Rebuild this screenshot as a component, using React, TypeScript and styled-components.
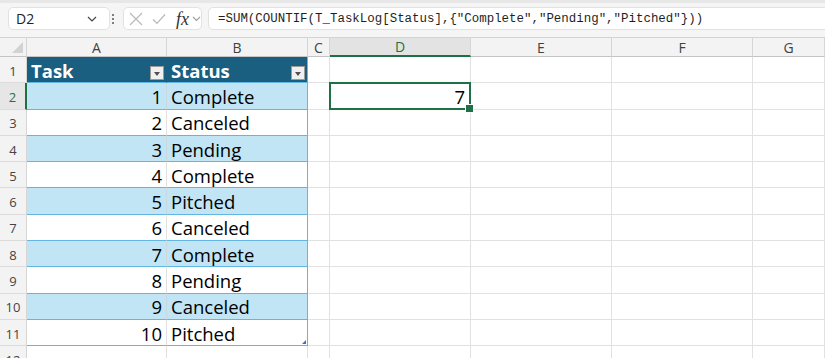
import React from "react";
import styled, { createGlobalStyle } from "styled-components";

const GlobalStyle = createGlobalStyle`
  html, body { margin: 0; padding: 0; background: #fff; }
  body {
    width: 825px;
    height: 358px;
    overflow: hidden;
    font-family: "Open Sans", "Liberation Sans", sans-serif;
  }
  * { box-sizing: border-box; }
`;

const GREEN = "#1e7145";
const TABLE_LINE = "#62b6e6";

const Window = styled.div`
  width: 825px;
  height: 358px;
  overflow: hidden;
  display: flex;
  flex-direction: column;
`;

const Bar = styled.div`
  height: 38px;
  flex: none;
  display: flex;
  align-items: flex-start;
  padding: 4px 0 0 8px;
  background: #f5f5f5;
  border-top: 3px solid #e7e7e7;
  border-bottom: 1px solid #d4d4d4;
`;

const NameBox = styled.div`
  width: 102px;
  height: 23px;
  display: flex;
  align-items: center;
  justify-content: space-between;
  padding: 0 12px 0 7px;
  background: #fff;
  border: 1px solid #e2e2e2;
  border-radius: 5px;
  font-size: 14px;
  color: #222;
`;

const Kebab = styled.div`
  width: 3px;
  height: 23px;
  margin: 0 8px 0 2px;
  display: flex;
  flex-direction: column;
  justify-content: center;
  gap: 2px;
  span {
    width: 2px;
    height: 2px;
    background: #555;
    border-radius: 1px;
  }
`;

const FxBox = styled.div`
  width: 79px;
  height: 23px;
  display: flex;
  align-items: center;
  gap: 9px;
  padding-left: 5px;
  background: #fff;
  border: 1px solid #e2e2e2;
  border-radius: 5px;
`;

const Fx = styled.span`
  font-family: "Liberation Serif", "DejaVu Serif", serif;
  font-style: italic;
  font-size: 18px;
  color: #333;
  margin-left: 1px;
  margin-right: -6px;
  line-height: 1;
`;

const Formula = styled.div`
  flex: 1;
  height: 23px;
  margin: 0 -10px 0 6px;
  display: flex;
  align-items: center;
  padding-left: 9px;
  background: #fff;
  border: 1px solid #e2e2e2;
  border-radius: 5px;
  font-family: "Liberation Mono", "DejaVu Sans Mono", monospace;
  font-size: 12.45px;
  color: #1f1f1f;
  white-space: pre;
`;

const Sheet = styled.div`
  display: grid;
  grid-template-columns: 27px 140px 141px 22px 141px 141px 141px 1fr;
  grid-template-rows: 19px repeat(12, 26.3px);
`;

const Corner = styled.div`
  background: #f3f3f3;
  border-right: 1px solid #d6d6d6;
  border-bottom: 1px solid #c4c4c4;
  display: flex;
  align-items: flex-end;
  justify-content: flex-end;
  padding: 0 3px 3px 0;
`;

const ColHead = styled.div<{ $active?: boolean }>`
  display: flex;
  align-items: center;
  justify-content: center;
  font-size: 14px;
  color: ${p => (p.$active ? GREEN : "#424242")};
  background: ${p => (p.$active ? "#e3e3e3" : "#f3f3f3")};
  border-right: 1px solid #d6d6d6;
  border-bottom: ${p => (p.$active ? `2px solid ${GREEN}` : "1px solid #c4c4c4")};
`;

const RowHead = styled.div<{ $active?: boolean }>`
  display: flex;
  align-items: center;
  justify-content: center;
  font-size: 13px;
  padding-top: 2px;
  color: ${p => (p.$active ? GREEN : "#444")};
  background: ${p => (p.$active ? "#e6e6e6" : "#f3f3f3")};
  border-right: ${p => (p.$active ? `2px solid ${GREEN}` : "1px solid #d6d6d6")};
  border-bottom: 1px solid #dcdcdc;
`;

type Kind = "plain" | "head" | "band" | "row";

const bg: Record<Kind, string> = {
  plain: "#fff",
  head: "#1a5e80",
  band: "#c1e5f5",
  row: "#fff",
};

const Cell = styled.div<{ $kind: Kind; $right?: boolean; $edge?: boolean }>`
  position: relative;
  display: flex;
  align-items: center;
  justify-content: ${p => (p.$right ? "flex-end" : "flex-start")};
  padding: 1px 4px 0 4px;
  font-size: 18.5px;
  white-space: nowrap;
  color: ${p => (p.$kind === "head" ? "#fff" : "#000")};
  font-weight: ${p => (p.$kind === "head" ? 700 : 400)};
  background: ${p => bg[p.$kind]};
  border-right: 1px solid
    ${p =>
      p.$edge ? TABLE_LINE : p.$kind === "head" ? "#1a5e80" : p.$kind === "band" ? "#c9d7de" : "#e1e1e1"};
  border-bottom: 1px solid ${p => (p.$kind === "plain" ? "#e1e1e1" : TABLE_LINE)};
`;

const Selected = styled(Cell)`
  z-index: 2;
  padding-right: 5px;
  &::after {
    content: "";
    position: absolute;
    inset: -1px -1px -1px -1px;
    border: 2px solid ${GREEN};
    pointer-events: none;
  }
  &::before {
    content: "";
    position: absolute;
    right: -4px;
    bottom: -4px;
    width: 7px;
    height: 7px;
    background: ${GREEN};
    border: 1px solid #fff;
    z-index: 3;
  }
`;

const ResizeCorner = styled(Cell)`
  &::after {
    content: "";
    position: absolute;
    right: 1px;
    bottom: 1px;
    border-style: solid;
    border-width: 0 0 4px 4px;
    border-color: transparent transparent #3c6fd1 transparent;
  }
`;

const FilterButton = styled.div`
  width: 14px;
  height: 14px;
  margin-left: auto;
  align-self: flex-end;
  margin-bottom: 2px;
  margin-right: -2px;
  background: #f0f0f0;
  border: 1px solid #9a9a9a;
  display: flex;
  align-items: center;
  justify-content: center;
  &::after {
    content: "";
    border-style: solid;
    border-width: 4px 3.5px 0 3.5px;
    border-color: #505050 transparent transparent transparent;
    margin-top: 1px;
  }
`;

const ChevronDown = ({ w = 10, color = "#555" }: { w?: number; color?: string }) => (
  <svg width={w} height={w * 0.6} viewBox="0 0 10 6">
    <path d="M1 1 L5 5 L9 1" fill="none" stroke={color} strokeWidth={1.2} />
  </svg>
);

const columns = ["A", "B", "C", "D", "E", "F", "G"];

const tasks: [number, string][] = [
  [1, "Complete"],
  [2, "Canceled"],
  [3, "Pending"],
  [4, "Complete"],
  [5, "Pitched"],
  [6, "Canceled"],
  [7, "Complete"],
  [8, "Pending"],
  [9, "Canceled"],
  [10, "Pitched"],
];

const FORMULA = '=SUM(COUNTIF(T_TaskLog[Status],{"Complete","Pending","Pitched"}))';

const PlainCells = ({ count }: { count: number }) => (
  <>
    {Array.from({ length: count }).map((_, i) => (
      <Cell key={i} $kind="plain" />
    ))}
  </>
);

export default function App() {
  return (
    <Window>
      <GlobalStyle />
      <Bar>
        <NameBox>
          D2
          <ChevronDown w={10} color="#444" />
        </NameBox>
        <Kebab>
          <span />
          <span />
          <span />
        </Kebab>
        <FxBox>
          <svg width="14" height="14" viewBox="0 0 14 14">
            <path d="M1 1 L13 13 M13 1 L1 13" stroke="#b8b8b8" strokeWidth={1.2} />
          </svg>
          <svg width="14" height="12" viewBox="0 0 14 12">
            <path d="M1 6.5 L5 10.5 L13 1.5" fill="none" stroke="#b8b8b8" strokeWidth={1.2} />
          </svg>
          <Fx>fx</Fx>
          <ChevronDown w={9} color="#9a9a9a" />
        </FxBox>
        <Formula>{FORMULA}</Formula>
      </Bar>

      <Sheet>
        <Corner>
          <svg width="11" height="11" viewBox="0 0 11 11">
            <path d="M11 0 L11 11 L0 11 Z" fill="#d2d2d2" />
          </svg>
        </Corner>
        {columns.map(c => (
          <ColHead key={c} $active={c === "D"}>
            {c}
          </ColHead>
        ))}

        <RowHead>1</RowHead>
        <Cell $kind="head">
          Task
          <FilterButton />
        </Cell>
        <Cell $kind="head" $edge>
          Status
          <FilterButton />
        </Cell>
        <PlainCells count={5} />

        {tasks.map(([n, status], i) => {
          const row = i + 2;
          const kind: Kind = i % 2 === 0 ? "band" : "row";
          const last = i === tasks.length - 1;
          const StatusCell = last ? ResizeCorner : Cell;
          return (
            <React.Fragment key={n}>
              <RowHead $active={row === 2}>{row}</RowHead>
              <Cell $kind={kind} $right>
                {n}
              </Cell>
              <StatusCell $kind={kind} $edge>
                {status}
              </StatusCell>
              <Cell $kind="plain" />
              {row === 2 ? (
                <Selected $kind="plain" $right>
                  7
                </Selected>
              ) : (
                <Cell $kind="plain" />
              )}
              <PlainCells count={3} />
            </React.Fragment>
          );
        })}

        <RowHead>12</RowHead>
        <PlainCells count={7} />
      </Sheet>
    </Window>
  );
}
